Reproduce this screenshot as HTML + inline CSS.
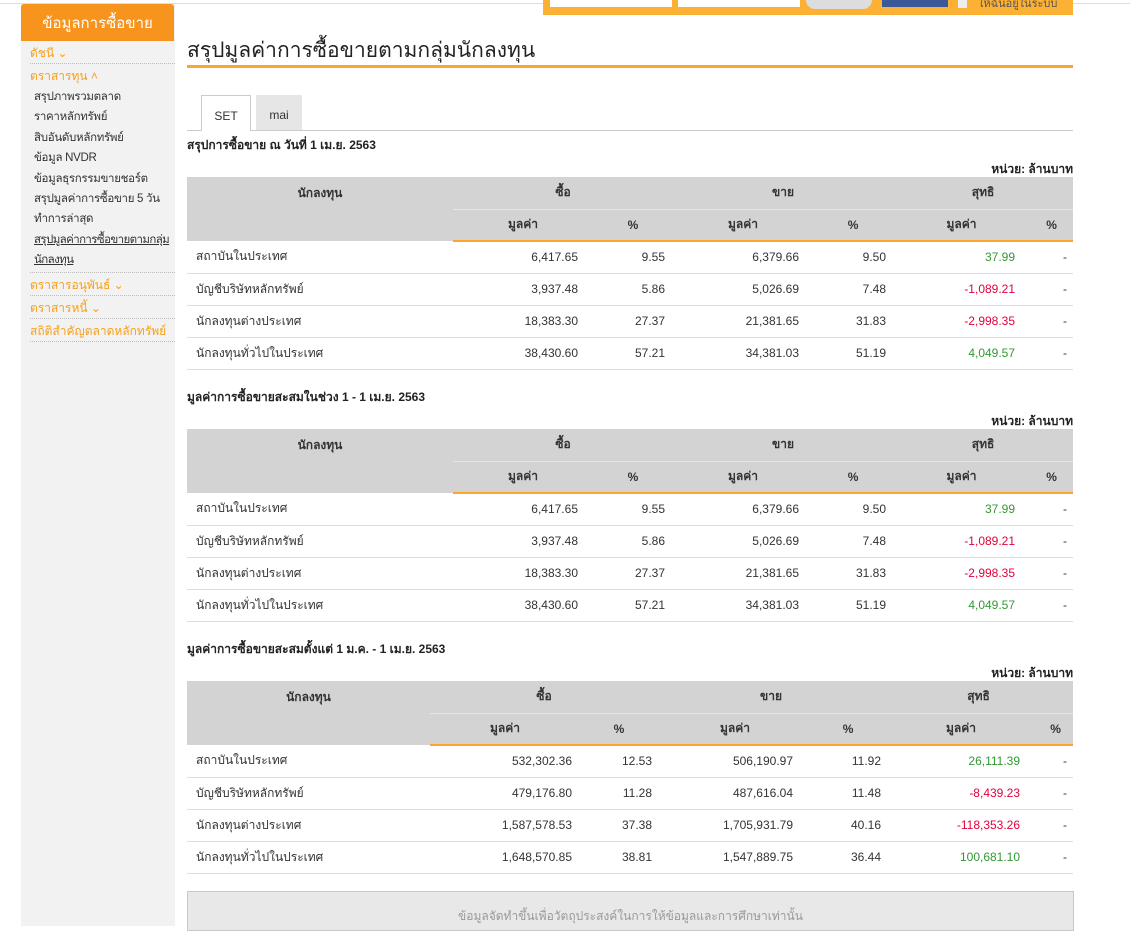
<!DOCTYPE html>
<html><head><meta charset="utf-8">
<style>
*{margin:0;padding:0;box-sizing:border-box}
body{width:1130px;height:926px;overflow:hidden;background:#fff;font-family:"Liberation Sans",sans-serif;color:#333;position:relative}
.abs{position:absolute}
.topline{left:0;top:3px;width:1130px;height:1px;background:#ddd}
.side{left:21px;top:4px;width:154px;height:922px;background:#f2f2f2}
.sidehead{left:21px;top:4px;width:153px;height:37px;background:#f7941d;border-radius:3px 3px 0 0;color:#fff;font-size:15px;text-align:center;line-height:40px}
.menu{left:30px;width:145px;font-size:12px}
.cat{color:#f7a11a;border-bottom:1px dotted #bbb;height:23px;line-height:24px}
.sub{color:#333;padding-left:4px;line-height:20.4px;font-size:11.5px;letter-spacing:-0.3px;white-space:nowrap}
h1{position:absolute;left:187px;top:34px;font-size:21px;font-weight:normal;color:#222}
.tl{left:187px;top:65px;width:886px;height:3px;background:#f9a62a}
table{position:absolute;left:187px;width:886px;border-collapse:collapse;table-layout:fixed;font-size:12px}
th{background:#d3d3d3;height:32px;font-weight:bold;color:#333;text-align:center}
tr.h2 th.v{border-top:1px solid #e6e6e6;border-bottom:2px solid #f9a62a}
td{height:32px;border-bottom:1px solid #ddd;text-align:right;color:#333}
td.n{text-align:left;padding-left:9px}
.g{color:#339933}.r{color:#e4003a}
.sec{left:187px;font-size:12px;font-weight:bold;color:#222}
.unit{right:57px;font-size:12px;font-weight:bold;color:#222}
</style></head><body>
<div class="abs topline"></div>
<div class="abs" style="left:543px;top:0;width:530px;height:15px;background:#fcb034"></div>
<div class="abs" style="left:550px;top:0;width:122px;height:7px;background:#fff"></div>
<div class="abs" style="left:678px;top:0;width:122px;height:7px;background:#fff"></div>
<div class="abs" style="left:806px;top:0;width:66px;height:9px;background:#ddd;border-radius:0 0 12px 12px"></div>
<div class="abs" style="left:882px;top:0;width:66px;height:7px;background:#3b5998"></div>
<div class="abs" style="left:958px;top:0;width:9px;height:8px;background:#eee"></div>
<div class="abs" style="left:978px;top:-6px;font-size:11px;color:#555">ให้ฉันอยู่ในระบบ</div>

<div class="abs side"></div>
<div class="abs sidehead">ข้อมูลการซื้อขาย</div>
<div class="abs menu" style="top:41px">
<div class="cat">ดัชนี ⌄</div>
<div class="cat" style="border:none">ตราสารทุน ˄</div>
<div class="sub">สรุปภาพรวมตลาด</div>
<div class="sub">ราคาหลักทรัพย์</div>
<div class="sub">สิบอันดับหลักทรัพย์</div>
<div class="sub">ข้อมูล NVDR</div>
<div class="sub">ข้อมูลธุรกรรมขายชอร์ต</div>
<div class="sub">สรุปมูลค่าการซื้อขาย 5 วัน<br>ทำการล่าสุด</div>
<div class="sub" style="text-decoration:underline;border-bottom:1px dotted #bbb;padding-bottom:1px;letter-spacing:-0.6px">สรุปมูลค่าการซื้อขายตามกลุ่ม<br>นักลงทุน</div>
<div class="cat">ตราสารอนุพันธ์ ⌄</div>
<div class="cat">ตราสารหนี้ ⌄</div>
<div class="cat">สถิติสำคัญตลาดหลักทรัพย์</div>
</div>

<h1>สรุปมูลค่าการซื้อขายตามกลุ่มนักลงทุน</h1>
<div class="abs tl"></div>
<div class="abs" style="left:187px;top:130px;width:886px;height:1px;background:#ccc"></div>
<div class="abs" style="left:201px;top:95px;width:50px;height:36px;border:1px solid #ccc;border-bottom:none;background:#fff;font-size:12px;text-align:center;line-height:40px">SET</div>
<div class="abs" style="left:256px;top:95px;width:46px;height:35px;background:#e6e6e6;font-size:12px;text-align:center;line-height:40px">mai</div>

<div class="abs sec" style="top:136px">สรุปการซื้อขาย ณ วันที่ 1 เม.ย. 2563</div>
<div class="abs unit" style="top:160px">หน่วย: ล้านบาท</div>
<table style="top:177px">
<colgroup><col style="width:266px"><col style="width:140px"><col style="width:80px"><col style="width:140px"><col style="width:80px"><col style="width:137px"><col style="width:43px"></colgroup>
<tr><th rowspan="2" style="vertical-align:top;padding-top:7px">นักลงทุน</th><th colspan="2">ซื้อ</th><th colspan="2">ขาย</th><th colspan="2">สุทธิ</th></tr>
<tr class="h2"><th class="v">มูลค่า</th><th class="v">%</th><th class="v">มูลค่า</th><th class="v">%</th><th class="v">มูลค่า</th><th class="v">%</th></tr>
<tr><td class="n">สถาบันในประเทศ</td><td style="padding-right:15px">6,417.65</td><td style="padding-right:8px">9.55</td><td style="padding-right:14px">6,379.66</td><td style="padding-right:7px">9.50</td><td class="g" style="padding-right:15px">37.99</td><td style="padding-right:6px">-</td></tr>
<tr><td class="n">บัญชีบริษัทหลักทรัพย์</td><td style="padding-right:15px">3,937.48</td><td style="padding-right:8px">5.86</td><td style="padding-right:14px">5,026.69</td><td style="padding-right:7px">7.48</td><td class="r" style="padding-right:15px">-1,089.21</td><td style="padding-right:6px">-</td></tr>
<tr><td class="n">นักลงทุนต่างประเทศ</td><td style="padding-right:15px">18,383.30</td><td style="padding-right:8px">27.37</td><td style="padding-right:14px">21,381.65</td><td style="padding-right:7px">31.83</td><td class="r" style="padding-right:15px">-2,998.35</td><td style="padding-right:6px">-</td></tr>
<tr><td class="n">นักลงทุนทั่วไปในประเทศ</td><td style="padding-right:15px">38,430.60</td><td style="padding-right:8px">57.21</td><td style="padding-right:14px">34,381.03</td><td style="padding-right:7px">51.19</td><td class="g" style="padding-right:15px">4,049.57</td><td style="padding-right:6px">-</td></tr>
</table>

<div class="abs sec" style="top:388px">มูลค่าการซื้อขายสะสมในช่วง 1 - 1 เม.ย. 2563</div>
<div class="abs unit" style="top:412px">หน่วย: ล้านบาท</div>
<table style="top:429px">
<colgroup><col style="width:266px"><col style="width:140px"><col style="width:80px"><col style="width:140px"><col style="width:80px"><col style="width:137px"><col style="width:43px"></colgroup>
<tr><th rowspan="2" style="vertical-align:top;padding-top:7px">นักลงทุน</th><th colspan="2">ซื้อ</th><th colspan="2">ขาย</th><th colspan="2">สุทธิ</th></tr>
<tr class="h2"><th class="v">มูลค่า</th><th class="v">%</th><th class="v">มูลค่า</th><th class="v">%</th><th class="v">มูลค่า</th><th class="v">%</th></tr>
<tr><td class="n">สถาบันในประเทศ</td><td style="padding-right:15px">6,417.65</td><td style="padding-right:8px">9.55</td><td style="padding-right:14px">6,379.66</td><td style="padding-right:7px">9.50</td><td class="g" style="padding-right:15px">37.99</td><td style="padding-right:6px">-</td></tr>
<tr><td class="n">บัญชีบริษัทหลักทรัพย์</td><td style="padding-right:15px">3,937.48</td><td style="padding-right:8px">5.86</td><td style="padding-right:14px">5,026.69</td><td style="padding-right:7px">7.48</td><td class="r" style="padding-right:15px">-1,089.21</td><td style="padding-right:6px">-</td></tr>
<tr><td class="n">นักลงทุนต่างประเทศ</td><td style="padding-right:15px">18,383.30</td><td style="padding-right:8px">27.37</td><td style="padding-right:14px">21,381.65</td><td style="padding-right:7px">31.83</td><td class="r" style="padding-right:15px">-2,998.35</td><td style="padding-right:6px">-</td></tr>
<tr><td class="n">นักลงทุนทั่วไปในประเทศ</td><td style="padding-right:15px">38,430.60</td><td style="padding-right:8px">57.21</td><td style="padding-right:14px">34,381.03</td><td style="padding-right:7px">51.19</td><td class="g" style="padding-right:15px">4,049.57</td><td style="padding-right:6px">-</td></tr>
</table>

<div class="abs sec" style="top:640px">มูลค่าการซื้อขายสะสมตั้งแต่ 1 ม.ค. - 1 เม.ย. 2563</div>
<div class="abs unit" style="top:664px">หน่วย: ล้านบาท</div>
<table style="top:681px">
<colgroup><col style="width:243px"><col style="width:150px"><col style="width:78px"><col style="width:154px"><col style="width:72px"><col style="width:154px"><col style="width:35px"></colgroup>
<tr><th rowspan="2" style="vertical-align:top;padding-top:7px">นักลงทุน</th><th colspan="2">ซื้อ</th><th colspan="2">ขาย</th><th colspan="2">สุทธิ</th></tr>
<tr class="h2"><th class="v">มูลค่า</th><th class="v">%</th><th class="v">มูลค่า</th><th class="v">%</th><th class="v">มูลค่า</th><th class="v">%</th></tr>
<tr><td class="n">สถาบันในประเทศ</td><td style="padding-right:8px">532,302.36</td><td style="padding-right:6px">12.53</td><td style="padding-right:19px">506,190.97</td><td style="padding-right:3px">11.92</td><td class="g" style="padding-right:18px">26,111.39</td><td style="padding-right:6px">-</td></tr>
<tr><td class="n">บัญชีบริษัทหลักทรัพย์</td><td style="padding-right:8px">479,176.80</td><td style="padding-right:6px">11.28</td><td style="padding-right:19px">487,616.04</td><td style="padding-right:3px">11.48</td><td class="r" style="padding-right:18px">-8,439.23</td><td style="padding-right:6px">-</td></tr>
<tr><td class="n">นักลงทุนต่างประเทศ</td><td style="padding-right:8px">1,587,578.53</td><td style="padding-right:6px">37.38</td><td style="padding-right:19px">1,705,931.79</td><td style="padding-right:3px">40.16</td><td class="r" style="padding-right:18px">-118,353.26</td><td style="padding-right:6px">-</td></tr>
<tr><td class="n">นักลงทุนทั่วไปในประเทศ</td><td style="padding-right:8px">1,648,570.85</td><td style="padding-right:6px">38.81</td><td style="padding-right:19px">1,547,889.75</td><td style="padding-right:3px">36.44</td><td class="g" style="padding-right:18px">100,681.10</td><td style="padding-right:6px">-</td></tr>
</table>

<div class="abs" style="left:187px;top:891px;width:887px;height:40px;background:#e8e8e8;border:1px solid #c8c8c8;font-size:12px;color:#999;text-align:center;padding-top:15px">ข้อมูลจัดทำขึ้นเพื่อวัตถุประสงค์ในการให้ข้อมูลและการศึกษาเท่านั้น</div>
</body></html>
